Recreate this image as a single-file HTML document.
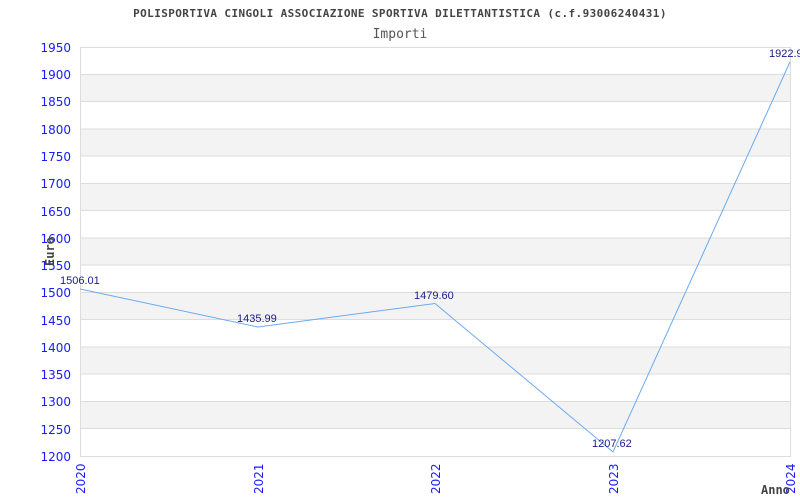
<!DOCTYPE html>
<html><head><meta charset="utf-8"><style>
html,body{margin:0;padding:0;background:#fff;width:800px;height:500px;overflow:hidden}
svg text{font-family:"DejaVu Sans","Liberation Sans",sans-serif}
svg text.lab{font-family:"Liberation Sans",sans-serif}
</style></head><body>
<svg width="800" height="500" xmlns="http://www.w3.org/2000/svg">
<rect width="800" height="500" fill="#fff"/>
<text x="400" y="17" text-anchor="middle" font-weight="bold" font-size="11" fill="#444" letter-spacing="0.4" style="font-family:'DejaVu Sans Mono',monospace">POLISPORTIVA CINGOLI ASSOCIAZIONE SPORTIVA DILETTANTISTICA (c.f.93006240431)</text>
<text x="400" y="38" text-anchor="middle" font-size="13" fill="#555" style="font-family:'DejaVu Sans Mono',monospace">Importi</text>
<g fill="#f3f3f3">
<rect x="80" y="74.3" width="710" height="27.3"/>
<rect x="80" y="128.8" width="710" height="27.3"/>
<rect x="80" y="183.3" width="710" height="27.3"/>
<rect x="80" y="237.9" width="710" height="27.3"/>
<rect x="80" y="292.4" width="710" height="27.3"/>
<rect x="80" y="346.9" width="710" height="27.3"/>
<rect x="80" y="401.5" width="710" height="27.3"/>
</g>
<g stroke="#ddd" stroke-width="1">
<line x1="80" x2="790" y1="74.5" y2="74.5"/><line x1="80" x2="790" y1="101.5" y2="101.5"/>
<line x1="80" x2="790" y1="129" y2="129"/><line x1="80" x2="790" y1="156" y2="156"/>
<line x1="80" x2="790" y1="183.5" y2="183.5"/><line x1="80" x2="790" y1="210.5" y2="210.5"/>
<line x1="80" x2="790" y1="238" y2="238"/><line x1="80" x2="790" y1="265" y2="265"/>
<line x1="80" x2="790" y1="292.5" y2="292.5"/><line x1="80" x2="790" y1="319.5" y2="319.5"/>
<line x1="80" x2="790" y1="347" y2="347"/><line x1="80" x2="790" y1="374" y2="374"/>
<line x1="80" x2="790" y1="401.5" y2="401.5"/><line x1="80" x2="790" y1="428.5" y2="428.5"/>
</g>
<rect x="80.5" y="47.5" width="710" height="409" fill="none" stroke="#ddd"/>
<g fill="#1a1aff" font-size="12" text-anchor="end">
<text x="71" y="52">1950</text><text x="71" y="79">1900</text><text x="71" y="106">1850</text>
<text x="71" y="134">1800</text><text x="71" y="161">1750</text><text x="71" y="188">1700</text>
<text x="71" y="216">1650</text><text x="71" y="243">1600</text><text x="71" y="270">1550</text>
<text x="71" y="297">1500</text><text x="71" y="325">1450</text><text x="71" y="352">1400</text>
<text x="71" y="379">1350</text><text x="71" y="406">1300</text><text x="71" y="434">1250</text>
<text x="71" y="461">1200</text>
</g>
<g fill="#1a1aff" font-size="12">
<text transform="translate(85,494) rotate(-90)">2020</text>
<text transform="translate(263,494) rotate(-90)">2021</text>
<text transform="translate(440,494) rotate(-90)">2022</text>
<text transform="translate(618,494) rotate(-90)">2023</text>
<text transform="translate(795,494) rotate(-90)">2024</text>
</g>
<text transform="translate(54,266) rotate(-90)" font-size="12" font-weight="bold" fill="#444" style="font-family:'DejaVu Sans Mono',monospace">Euro</text>
<text x="761" y="494" font-size="12" font-weight="bold" fill="#444" style="font-family:'DejaVu Sans Mono',monospace">Anno</text>
<polyline points="80,289 258,327 435,303.5 613,452 790,62" fill="none" stroke="#6aaaf0" stroke-width="1"/>
<g fill="#1a1a8a" font-size="11">
<text class="lab" x="60" y="284">1506.01</text>
<text class="lab" x="237" y="322">1435.99</text>
<text class="lab" x="414" y="299">1479.60</text>
<text class="lab" x="592" y="447">1207.62</text>
<text class="lab" x="769" y="57">1922.9</text>
</g>
</svg>
</body></html>
